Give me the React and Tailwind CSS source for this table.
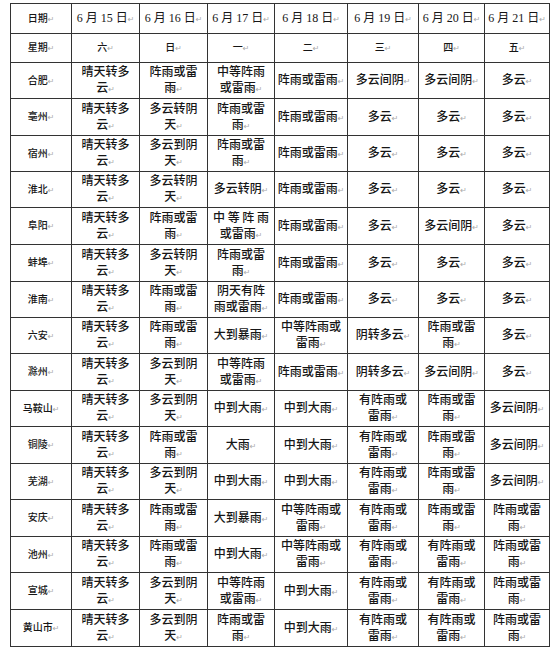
const days = ["6 月 15 日", "6 月 16 日", "6 月 17 日", "6 月 18 日", "6 月 19 日", "6 月 20 日", "6 月 21 日"];
const weekdays = ["六", "日", "一", "二", "三", "四", "五"];

// each cell: array of lines
const Q = ["晴天转多", "云"];
const ZL = ["阵雨或雷", "雨"];
const ZY = ["多云转阴", "天"];
const DY = ["多云到阴", "天"];
const ZD = ["中等阵雨", "或雷雨"];
const ZD5 = ["中等阵雨或", "雷雨"];
const YZ = ["有阵雨或", "雷雨"];

const rows = [
  ["合肥", Q, ZL, ZD, ["阵雨或雷雨"], ["多云间阴"], ["多云间阴"], ["多云"]],
  ["亳州", Q, ZY, ZL, ["阵雨或雷雨"], ["多云"], ["多云"], ["多云"]],
  ["宿州", Q, DY, ZL, ["阵雨或雷雨"], ["多云"], ["多云"], ["多云"]],
  ["淮北", Q, ZY, ["多云转阴"], ["阵雨或雷雨"], ["多云"], ["多云"], ["多云"]],
  ["阜阳", Q, ZL, ["中 等 阵 雨", "或雷雨"], ["阵雨或雷雨"], ["多云"], ["多云间阴"], ["多云"]],
  ["蚌埠", Q, ZY, ZL, ["阵雨或雷雨"], ["多云"], ["多云"], ["多云"]],
  ["淮南", Q, ZL, ["阴天有阵", "雨或雷雨"], ["阵雨或雷雨"], ["多云"], ["多云"], ["多云"]],
  ["六安", Q, ZL, ["大到暴雨"], ZD5, ["阴转多云"], ZL, ["多云"]],
  ["滁州", Q, DY, ZD, ["阵雨或雷雨"], ["阴转多云"], ["多云间阴"], ["多云"]],
  ["马鞍山", Q, DY, ["中到大雨"], ["中到大雨"], YZ, ZL, ["多云间阴"]],
  ["铜陵", Q, ZL, ["大雨"], ["中到大雨"], YZ, ZL, ["多云间阴"]],
  ["芜湖", Q, DY, ["中到大雨"], ["中到大雨"], YZ, ZL, ["多云间阴"]],
  ["安庆", Q, ZL, ["大到暴雨"], ZD5, YZ, ZL, ZL],
  ["池州", Q, ZL, ["中到大雨"], ZD5, YZ, YZ, ZL],
  ["宣城", Q, DY, ZD, ["中到大雨"], YZ, YZ, ZL],
  ["黄山市", Q, DY, ZL, ["中到大雨"], YZ, YZ, ZL],
];

const rowHeights = ["h-[36px]", "h-[37px]", "h-[36px]", "h-[36px]", "h-[37px]", "h-[37px]", "h-[36px]", "h-[36px]", "h-[37px]", "h-[36px]", "h-[37px]", "h-[36px]", "h-[37px]", "h-[36px]", "h-[37px]", "h-[37px]"];

const colWidths = ["w-[61px]", "w-[68px]", "w-[68px]", "w-[67px]", "w-[73px]", "w-[71px]", "w-[66px]", "w-[65px]"];

const cellClass = "border border-[#333] p-0 text-center align-middle leading-[16px]";
const smallCell = cellClass + " text-[10px]";

function Mark() {
  return <span className="font-['DejaVu_Sans',sans-serif] text-[8px] font-normal text-[#aaa]">↵</span>;
}

function Lines({ lines }) {
  return lines.map((l, i) => (
    <div key={i} className="whitespace-nowrap">
      {l}
      {i === lines.length - 1 && <Mark />}
    </div>
  ));
}

export default function App() {
  return (
    <div className="min-h-[652px] w-[550px] bg-white pl-[10px] pt-[3px] font-['Noto_Sans_CJK_SC',sans-serif] text-[12px] font-medium text-[#161616]">
      <table className="table-fixed border-collapse">
        <colgroup>
          {colWidths.map((w, i) => (
            <col key={i} className={w} />
          ))}
        </colgroup>
        <tbody>
          <tr className="h-[30px]">
            <td className={smallCell}>日期<Mark /></td>
            {days.map((d) => (
              <td key={d} className={cellClass + " font-['Liberation_Serif','Noto_Sans_CJK_SC',serif] font-normal"}>
                {d}
                <Mark />
              </td>
            ))}
          </tr>
          <tr className="h-[29px]">
            <td className={smallCell}>星期<Mark /></td>
            {weekdays.map((d) => (
              <td key={d} className={smallCell}>
                {d}
                <Mark />
              </td>
            ))}
          </tr>
          {rows.map((r, ri) => (
            <tr key={r[0]} className={rowHeights[ri]}>
              <td className={smallCell}>
                {r[0]}
                <Mark />
              </td>
              {r.slice(1).map((c, ci) => (
                <td key={ci} className={cellClass}>
                  <Lines lines={c} />
                </td>
              ))}
            </tr>
          ))}
        </tbody>
      </table>
    </div>
  );
}
